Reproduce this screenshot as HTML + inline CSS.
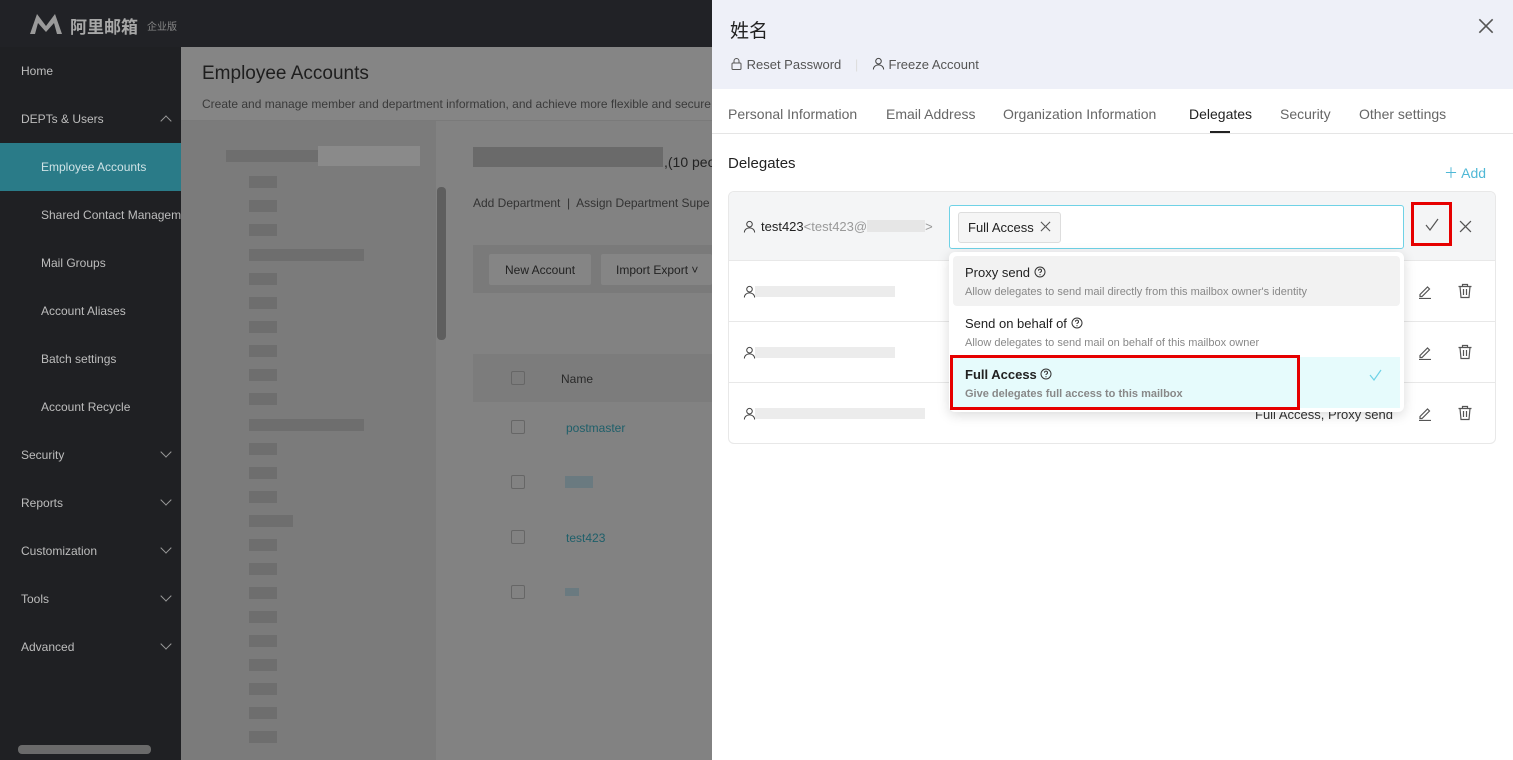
<!DOCTYPE html>
<html><head><meta charset="utf-8"><style>
*{box-sizing:border-box;margin:0;padding:0}
body{width:1513px;height:760px;overflow:hidden;font-family:"Liberation Sans","Noto Sans CJK SC",sans-serif;position:relative;background:#808080}
.top{position:absolute;left:0;top:0;width:712px;height:47px;background:#212226}
.side{position:absolute;left:0;top:47px;width:181px;height:713px;background:#1f2023}
.side div{position:absolute;left:21px;font-size:12px;color:#bdbdbd}
.side .sub{left:41px;white-space:nowrap}
.side .act{left:0;width:181px;height:48px;background:#2a7b88;color:#cfe3e6;padding:17px 0 0 41px}
.chev{position:absolute;left:162px;width:8px;height:8px;border-right:1px solid #999;border-bottom:1px solid #999}
.main{position:absolute;left:181px;top:47px;width:531px;height:713px;background:#828282;white-space:nowrap}
.hd{position:absolute;left:0;top:0;width:531px;height:74px;background:#858585;border-bottom:1px solid #7a7a7a}
.tree{position:absolute;left:0;top:74px;width:255px;height:639px;background:#7b7b7b}
.blur{position:absolute;background:#6e6e6e;height:12px}
.drawer{position:absolute;left:712px;top:0;width:801px;height:760px;background:#fff}
.dh{height:89px;background:#eef0f8;padding:16px 18px;position:relative}
.tabs{height:45px;border-bottom:1px solid #e5e5e5;position:relative}
.tabs span{position:absolute;top:17px;font-size:14px;color:#666}
.ic{position:absolute}
</style></head><body>
<svg width="0" height="0" style="position:absolute"><defs>
<symbol id="u" viewBox="0 0 14 14"><circle cx="7" cy="4.5" r="3" fill="none" stroke="#444" stroke-width="1.1"/><path d="M1.5 13.5c0-3 2.5-5 5.5-5s5.5 2 5.5 5" fill="none" stroke="#444" stroke-width="1.1"/></symbol>
<symbol id="pen" viewBox="0 0 16 16"><path d="M3 11.5 L10.5 4 L12.5 6 L5 13.5 L3 13.5Z" fill="none" stroke="#555" stroke-width="1.2"/><path d="M2 15.5h12" stroke="#555" stroke-width="1.2"/></symbol>
<symbol id="bin" viewBox="0 0 16 16"><path d="M1.5 3.5h13M5.5 3.5V1.5h5v2M3 3.5l1 11h8l1-11M6.5 6v6M9.5 6v6" fill="none" stroke="#555" stroke-width="1.2"/></symbol>
<symbol id="x" viewBox="0 0 12 12"><path d="M1 1L11 11M11 1L1 11" stroke="#555" stroke-width="1.2"/></symbol>
<symbol id="q" viewBox="0 0 12 12"><circle cx="6" cy="6" r="5" fill="none" stroke="#333" stroke-width="1"/><path d="M4.5 4.7a1.5 1.5 0 1 1 1.9 1.4c-.4.2-.4.5-.4.9" fill="none" stroke="#333" stroke-width="1"/><circle cx="6" cy="8.7" r=".6" fill="#333"/></symbol>
</defs></svg>
<div class="top">
<svg style="position:absolute;left:28px;top:12px" width="36" height="24"><path d="M2 22 L9 2 L18 14 L27 2 L34 22 L29 22 L26 11 L18 20 L10 11 L7 22Z" fill="#9a9a9a"/></svg>
<span style="position:absolute;left:70px;top:13px;color:#a8a8a8;font-size:17px;font-weight:bold">阿里邮箱</span>
<span style="position:absolute;left:147px;top:18px;color:#888;font-size:10px">企业版</span>
</div>
<div class="side">
<div style="top:17px">Home</div>
<div style="top:65px">DEPTs &amp; Users</div><span class="chev" style="top:70px;transform:rotate(-135deg)"></span>
<div class="act" style="top:96px">Employee Accounts</div>
<div class="sub" style="top:161px">Shared Contact Managem</div>
<div class="sub" style="top:209px">Mail Groups</div>
<div class="sub" style="top:257px">Account Aliases</div>
<div class="sub" style="top:305px">Batch settings</div>
<div class="sub" style="top:353px">Account Recycle</div>
<div style="top:401px">Security</div><span class="chev" style="top:401px;transform:rotate(45deg)"></span>
<div style="top:449px">Reports</div><span class="chev" style="top:449px;transform:rotate(45deg)"></span>
<div style="top:497px">Customization</div><span class="chev" style="top:497px;transform:rotate(45deg)"></span>
<div style="top:545px">Tools</div><span class="chev" style="top:545px;transform:rotate(45deg)"></span>
<div style="top:593px">Advanced</div><span class="chev" style="top:593px;transform:rotate(45deg)"></span>
<div style="left:18px;top:698px;width:133px;height:9px;background:#6a6a6a;border-radius:4px"></div>
</div>
<div class="main">
<div class="hd"><div style="position:absolute;left:21px;top:16px;font-size:19px;color:#1e1e1e">Employee Accounts</div>
<div style="position:absolute;left:21px;top:50px;font-size:12px;color:#3a3a3a">Create and manage member and department information, and achieve more flexible and secure</div></div>
<div class="tree">
<div class="blur" style="left:45px;top:29px;width:92px"></div><div style="position:absolute;left:137px;top:25px;width:102px;height:20px;background:#8a8a8a"></div>
<div class="blur" style="left:68px;top:55px;width:28px"></div><div class="blur" style="left:68px;top:79px;width:28px"></div><div class="blur" style="left:68px;top:103px;width:28px"></div>
<div class="blur" style="left:68px;top:128px;width:115px"></div>
<div class="blur" style="left:68px;top:152px;width:28px"></div><div class="blur" style="left:68px;top:176px;width:28px"></div><div class="blur" style="left:68px;top:200px;width:28px"></div><div class="blur" style="left:68px;top:224px;width:28px"></div><div class="blur" style="left:68px;top:248px;width:28px"></div><div class="blur" style="left:68px;top:272px;width:28px"></div>
<div class="blur" style="left:68px;top:298px;width:115px"></div>
<div class="blur" style="left:68px;top:322px;width:28px"></div><div class="blur" style="left:68px;top:346px;width:28px"></div><div class="blur" style="left:68px;top:370px;width:28px"></div><div class="blur" style="left:68px;top:394px;width:44px"></div><div class="blur" style="left:68px;top:418px;width:28px"></div><div class="blur" style="left:68px;top:442px;width:28px"></div><div class="blur" style="left:68px;top:466px;width:28px"></div><div class="blur" style="left:68px;top:490px;width:28px"></div><div class="blur" style="left:68px;top:514px;width:28px"></div><div class="blur" style="left:68px;top:538px;width:28px"></div><div class="blur" style="left:68px;top:562px;width:28px"></div><div class="blur" style="left:68px;top:586px;width:28px"></div><div class="blur" style="left:68px;top:610px;width:28px"></div>
<div style="position:absolute;left:256px;top:66px;width:9px;height:153px;background:#5e5e5e;border-radius:4px"></div>
</div>
<div class="blur" style="left:292px;top:100px;width:190px;height:20px;background:#6a6a6a"></div>
<div style="position:absolute;left:483px;top:107px;font-size:14px;color:#222">,(10 peo</div>
<div style="position:absolute;left:292px;top:149px;font-size:12px;color:#333">Add Department &nbsp;|&nbsp; Assign Department Supe</div>
<div style="position:absolute;left:292px;top:198px;width:239px;height:48px;background:#7a7a7a"></div>
<div style="position:absolute;left:308px;top:207px;width:102px;height:31px;background:#858585;border-radius:2px;font-size:12px;color:#222;padding:9px 16px">New Account</div>
<div style="position:absolute;left:420px;top:207px;width:111px;height:31px;background:#858585;border-radius:2px;font-size:12px;color:#222;padding:9px 15px">Import Export ˅</div>
<div style="position:absolute;left:292px;top:307px;width:239px;height:48px;background:#7c7c7c"></div>
<div style="position:absolute;left:330px;top:324px;width:14px;height:14px;border:1px solid #666;border-radius:2px"></div>
<div style="position:absolute;left:380px;top:325px;font-size:12px;color:#2a2a2a">Name</div>
<div style="position:absolute;left:330px;top:373px;width:14px;height:14px;border:1px solid #666;border-radius:2px"></div>
<div style="position:absolute;left:385px;top:374px;font-size:12px;color:#1e5f6a">postmaster</div>
<div style="position:absolute;left:330px;top:428px;width:14px;height:14px;border:1px solid #666;border-radius:2px"></div>
<div class="blur" style="left:384px;top:429px;width:28px;background:#6a7a80"></div>
<div style="position:absolute;left:330px;top:483px;width:14px;height:14px;border:1px solid #666;border-radius:2px"></div>
<div style="position:absolute;left:385px;top:484px;font-size:12px;color:#1e5f6a">test423</div>
<div style="position:absolute;left:330px;top:538px;width:14px;height:14px;border:1px solid #666;border-radius:2px"></div>
<div class="blur" style="left:384px;top:541px;width:14px;height:8px;background:#6a7a80"></div>
</div>
<div class="drawer">
<div class="dh">
<div style="font-size:19px;color:#222">姓名</div>
<svg class="ic" style="right:19px;top:18px" width="16" height="16"><use href="#x" width="16" height="16" style="stroke:#222"/></svg>
<div style="position:absolute;left:18px;top:57px;font-size:13px;color:#555;white-space:nowrap">
<svg width="13" height="13" style="vertical-align:-1px"><rect x="2" y="6" width="9" height="6.5" rx="1" fill="none" stroke="#555"/><path d="M4 6V4a2.5 2.5 0 0 1 5 0v2" fill="none" stroke="#555"/></svg>
Reset Password <span style="color:#ddd;margin:0 10px">|</span> <svg width="13" height="13" style="vertical-align:-1px"><use href="#u" width="13" height="13"/></svg> Freeze Account</div>
</div>
<div class="tabs">
<span style="left:16px">Personal Information</span><span style="left:174px">Email Address</span><span style="left:291px">Organization Information</span>
<span style="left:477px;color:#222">Delegates</span><div style="position:absolute;left:498px;top:42px;width:20px;height:2px;background:#222"></div>
<span style="left:568px">Security</span><span style="left:647px">Other settings</span>
</div>
<div style="position:absolute;left:16px;top:155px;font-size:15px;color:#222">Delegates</div>
<div style="position:absolute;left:732px;top:163px;font-size:14px;color:#4fb8d6">＋ Add</div>
<div style="position:absolute;left:16px;top:191px;width:768px;height:253px;border:1px solid #e8e8e8;border-radius:6px;overflow:hidden">
<div style="height:69px;background:#f4f5f6;border-bottom:1px solid #e8e8e8;position:relative">
<svg class="ic" style="left:14px;top:28px" width="13" height="13"><use href="#u" width="13" height="13"/></svg>
<span style="position:absolute;left:32px;top:27px;font-size:13px;color:#222;white-space:nowrap">test423<span style="color:#999">&lt;test423@<span style="display:inline-block;width:58px;height:12px;background:#e6e6e6;vertical-align:-1px"></span>&gt;</span></span>
<div style="position:absolute;left:220px;top:13px;width:455px;height:44px;border:1px solid #6fd2e6;border-radius:3px;background:#fff">
<div style="position:absolute;left:8px;top:6px;height:31px;border:1px solid #ddd;border-radius:3px;background:#f5f5f5;font-size:13px;color:#222;padding:7px 9px;white-space:nowrap">Full Access <svg width="11" height="11" style="margin-left:3px"><use href="#x" width="11" height="11"/></svg></div></div>
<div style="position:absolute;left:682px;top:10px;width:41px;height:44px;border:3px solid #e60000"><svg style="position:absolute;left:11px;top:13px" width="14" height="14"><path d="M1 7L5 12L13 1" fill="none" stroke="#555" stroke-width="1.2"/></svg></div>
<svg class="ic" style="left:730px;top:28px" width="13" height="13"><use href="#x" width="13" height="13"/></svg>
</div>
<div style="height:61px;border-bottom:1px solid #e8e8e8;position:relative"><svg class="ic" style="left:14px;top:24px" width="13" height="13"><use href="#u" width="13" height="13"/></svg><span style="position:absolute;left:26px;top:25px;width:140px;height:11px;background:#ececec"></span><svg class="ic" style="left:688px;top:22px" width="16" height="16"><use href="#pen" width="16" height="16"/></svg><svg class="ic" style="left:728px;top:22px" width="16" height="16"><use href="#bin" width="16" height="16"/></svg></div>
<div style="height:61px;border-bottom:1px solid #e8e8e8;position:relative"><svg class="ic" style="left:14px;top:24px" width="13" height="13"><use href="#u" width="13" height="13"/></svg><span style="position:absolute;left:26px;top:25px;width:140px;height:11px;background:#ececec"></span><svg class="ic" style="left:688px;top:22px" width="16" height="16"><use href="#pen" width="16" height="16"/></svg><svg class="ic" style="left:728px;top:22px" width="16" height="16"><use href="#bin" width="16" height="16"/></svg></div>
<div style="height:61px;position:relative"><svg class="ic" style="left:14px;top:24px" width="13" height="13"><use href="#u" width="13" height="13"/></svg><span style="position:absolute;left:26px;top:25px;width:170px;height:11px;background:#ececec"></span><span style="position:absolute;left:526px;top:24px;font-size:13px;color:#333">Full Access, Proxy send</span><svg class="ic" style="left:688px;top:22px" width="16" height="16"><use href="#pen" width="16" height="16"/></svg><svg class="ic" style="left:728px;top:22px" width="16" height="16"><use href="#bin" width="16" height="16"/></svg></div>
</div>
<div style="position:absolute;left:237px;top:252px;width:455px;height:160px;background:#fff;border-radius:6px;box-shadow:0 3px 12px rgba(0,0,0,.15);padding:4px">
<div style="height:50px;background:#f2f2f2;border-radius:4px;padding:9px 12px"><div style="font-size:13px;color:#222">Proxy send <svg width="12" height="12" style="vertical-align:-1px"><use href="#q" width="12" height="12"/></svg></div><div style="font-size:11px;color:#888;margin-top:6px">Allow delegates to send mail directly from this mailbox owner's identity</div></div>
<div style="height:51px;padding:10px 12px"><div style="font-size:13px;color:#222">Send on behalf of <svg width="12" height="12" style="vertical-align:-1px"><use href="#q" width="12" height="12"/></svg></div><div style="font-size:11px;color:#888;margin-top:6px">Allow delegates to send mail on behalf of this mailbox owner</div></div>
<div style="height:51px;background:#e6fbfc;position:relative;padding:10px 12px"><div style="font-size:13px;color:#222;font-weight:bold">Full Access <svg width="12" height="12" style="vertical-align:-1px"><use href="#q" width="12" height="12"/></svg></div><div style="font-size:11px;color:#888;margin-top:6px;font-weight:bold">Give delegates full access to this mailbox</div><svg style="position:absolute;right:18px;top:12px" width="13" height="12"><path d="M1 6L5 11L12 1" fill="none" stroke="#6fd2e6" stroke-width="1.2"/></svg></div>
<div style="position:absolute;left:1px;top:103px;width:350px;height:55px;border:3px solid #e60000"></div>
</div>
</div>
</body></html>
